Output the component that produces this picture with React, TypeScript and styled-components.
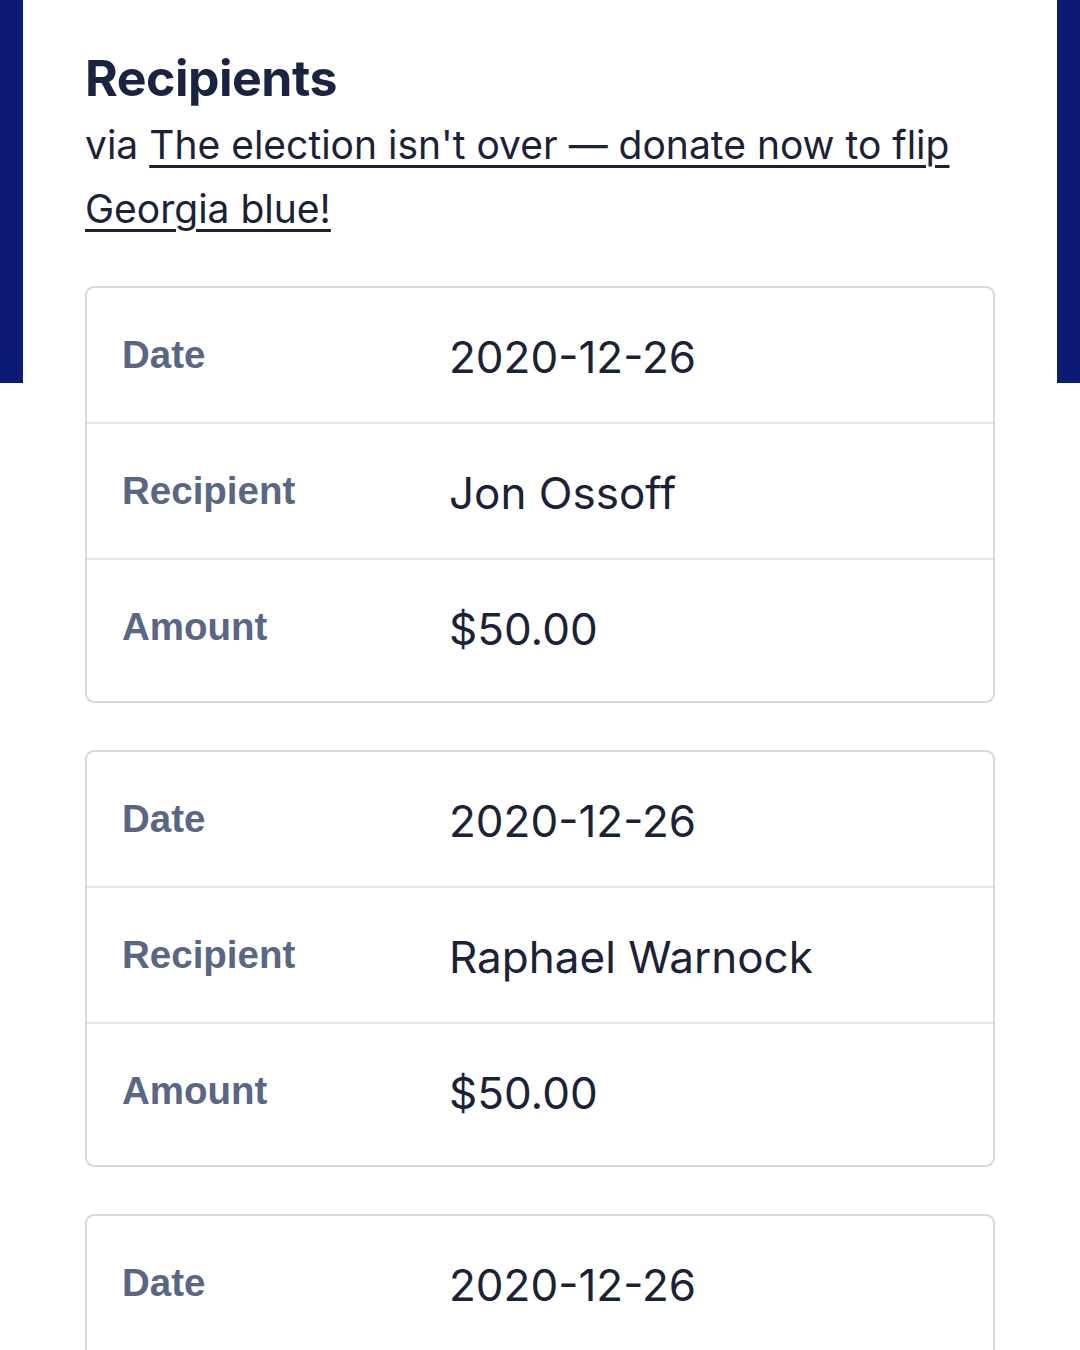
import React from "react";
import styled, { createGlobalStyle } from "styled-components";

const Global = createGlobalStyle`
  html, body { margin: 0; padding: 0; background: #ffffff; }
  body { font-family: Inter, "Liberation Sans", sans-serif; }
`;

const Page = styled.div`
  position: relative;
  width: 1080px;
  height: 1350px;
  overflow: hidden;
  background: #ffffff;
`;

const SideBar = styled.div<{ $side: "left" | "right" }>`
  position: absolute;
  top: 0;
  ${(p) => (p.$side === "left" ? "left: 0;" : "right: 0;")}
  width: 23px;
  height: 383px;
  background: #0b1a72;
`;

const Content = styled.main`
  padding: 48px 85px 0 85px;
  display: flex;
  flex-direction: column;
`;

const Title = styled.h1`
  margin: 0;
  font-family: Inter, "Liberation Sans", sans-serif;
  font-weight: 700;
  font-size: 50px;
  line-height: 60px;
  letter-spacing: -0.5px;
  color: #1a2340;
`;

const Subtitle = styled.p`
  margin: 5px 0 0 0;
  font-family: Inter, "Liberation Sans", sans-serif;
  font-size: 39px;
  line-height: 64px;
  color: #1b2238;
  max-width: 900px;
`;

const Link = styled.a`
  color: #1b2238;
  text-decoration: underline;
  text-decoration-thickness: 3px;
  text-underline-offset: 6px;
`;

const Cards = styled.div`
  display: flex;
  flex-direction: column;
  gap: 47px;
  margin-top: 45px;
  width: 910px;
`;

const Card = styled.section`
  border: 2px solid #d3d8e1;
  border-radius: 9px;
  padding-bottom: 7px;
  background: #fff;
`;

const Row = styled.div`
  display: grid;
  grid-template-columns: 327px 1fr;
  align-items: center;
  height: 134px;
  padding-left: 35px;
  & + & {
    border-top: 2px solid #e3e7ed;
  }
`;

const Label = styled.div`
  font-family: "Liberation Sans", Arial, sans-serif;
  font-weight: 700;
  font-size: 38.5px;
  color: #5a6784;
`;

const Value = styled.div`
  font-family: Inter, "Liberation Sans", sans-serif;
  font-size: 44px;
  color: #1b2238;
  padding-top: 4px;
`;

const donations = [
  { date: "2020-12-26", recipient: "Jon Ossoff", amount: "$50.00" },
  { date: "2020-12-26", recipient: "Raphael Warnock", amount: "$50.00" },
  { date: "2020-12-26", recipient: "Jon Ossoff", amount: "$50.00" },
];

export default function App() {
  return (
    <>
      <Global />
      <Page>
        <SideBar $side="left" />
        <SideBar $side="right" />
        <Content>
          <Title>Recipients</Title>
          <Subtitle>
            via <Link href="#">The election isn't over — donate now to flip Georgia blue!</Link>
          </Subtitle>
          <Cards>
            {donations.map((d, i) => (
              <Card key={i}>
                <Row>
                  <Label>Date</Label>
                  <Value>{d.date}</Value>
                </Row>
                <Row>
                  <Label>Recipient</Label>
                  <Value>{d.recipient}</Value>
                </Row>
                <Row>
                  <Label>Amount</Label>
                  <Value>{d.amount}</Value>
                </Row>
              </Card>
            ))}
          </Cards>
        </Content>
      </Page>
    </>
  );
}
